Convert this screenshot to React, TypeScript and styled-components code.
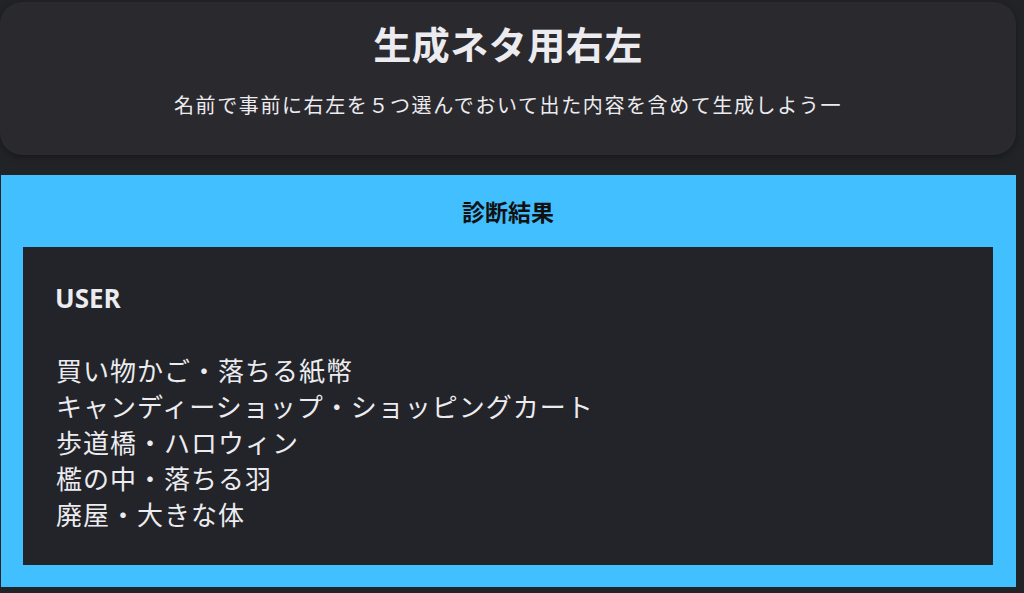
import React from "react";
import styled, { createGlobalStyle } from "styled-components";

const Global = createGlobalStyle`
  html, body { margin: 0; padding: 0; background: #222327; }
  body { font-family: "Noto Sans CJK JP", "Noto Sans", sans-serif; }
`;

const Page = styled.div`
  width: 1016px;
  padding-top: 2px;
  display: flex;
  flex-direction: column;
  gap: 20px;
`;

const HeaderCard = styled.header`
  background: #2a292e;
  border-radius: 22px;
  height: 153px;
  box-sizing: border-box;
  box-shadow: 0 2px 6px rgba(0, 0, 0, 0.35);
  display: flex;
  flex-direction: column;
  align-items: center;
  padding-top: 17px;
  color: #ececf0;
`;

const Title = styled.h1`
  margin: 0;
  font-size: 38px;
  line-height: 48px;
  font-weight: 700;
  letter-spacing: 0.5px;
`;

const Subtitle = styled.p`
  margin: 24px 0 0;
  font-size: 20px;
  line-height: 28px;
  letter-spacing: 1.6px;
  font-weight: 400;
`;

const ResultPanel = styled.section`
  background: #41bffe;
  margin-left: 1px;
  padding: 0 23px 22px 22px;
  display: flex;
  flex-direction: column;
`;

const PanelTitle = styled.h2`
  margin: 0;
  height: 72px;
  display: flex;
  align-items: center;
  justify-content: center;
  font-size: 23px;
  font-weight: 700;
  color: #111;
`;

const ResultBox = styled.div`
  background: #222429;
  height: 318px;
  box-sizing: border-box;
  padding: 35px 33px 0;
  color: #ececf0;
`;

const UserName = styled.div`
  font-family: "Open Sans", "Noto Sans", sans-serif;
  font-weight: 700;
  font-size: 26px;
  line-height: 32px;
  margin-bottom: 38px;
  margin-left: -1px;
`;

const Line = styled.div`
  font-size: 26px;
  line-height: 36px;
  letter-spacing: 1px;
`;

const lines = [
  "買い物かご・落ちる紙幣",
  "キャンディーショップ・ショッピングカート",
  "歩道橋・ハロウィン",
  "檻の中・落ちる羽",
  "廃屋・大きな体",
];

export default function App() {
  return (
    <>
      <Global />
      <Page>
        <HeaderCard>
          <Title>生成ネタ用右左</Title>
          <Subtitle>名前で事前に右左を５つ選んでおいて出た内容を含めて生成しよう一</Subtitle>
        </HeaderCard>
        <ResultPanel>
          <PanelTitle>診断結果</PanelTitle>
          <ResultBox>
            <UserName>USER</UserName>
            {lines.map((l) => (
              <Line key={l}>{l}</Line>
            ))}
          </ResultBox>
        </ResultPanel>
      </Page>
    </>
  );
}
